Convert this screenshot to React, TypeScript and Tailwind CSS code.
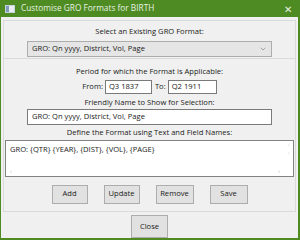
import { ChevronDown } from 'lucide-react';

const font = { fontFamily: '"Open Sans", "Noto Sans", sans-serif' };

const Button = ({ label, className = '' }: { label: string; className?: string }) => (
  <div
    className={`flex items-center justify-center bg-[#e1e1e1] border border-[#adadad] text-[#1a1a1a] ${className}`}
  >
    {label}
  </div>
);

const App = () => {
  return (
    <div className="w-[300px] h-[240px] bg-[#4e8b22] flex flex-col text-[7.6px] leading-none text-[#1a1a1a]" style={font}>
      {/* title bar */}
      <div className="h-[17px] flex items-center pl-[5px] pr-[8px] shrink-0">
        <div className="w-[10px] h-[8px] bg-[#e8eef4] border border-[#c8d2dc] flex">
          <div className="w-[3px] h-full bg-[#7f9bb8]" />
        </div>
        <span className="ml-[6px] text-[#e9f2e2] text-[8.3px]">Customise GRO Formats for BIRTH</span>
        <span className="ml-auto text-[#e9f2e2] text-[10px]">✕</span>
      </div>

      {/* body */}
      <div className="flex-1 ml-px mr-[2px] mb-[2px] bg-[#f0f0f0] flex flex-col pt-[3px] px-[2px]">
        <div className="border border-[#dadada] flex flex-col">
          <div className="flex flex-col items-center h-[38px] pt-[7px] border-b border-[#dadada]">
            <span>Select an Existing GRO Format:</span>
            <div className="mt-[5px] w-[245px] h-[16px] bg-[#e5e5e5] border border-[#adadad] flex items-center pl-[4px] pr-[4px]">
              <span>GRO: Qn yyyy, District, Vol, Page</span>
              <ChevronDown className="ml-auto w-[8px] h-[8px] text-[#606060]" strokeWidth={1.5} />
            </div>
          </div>

          <div className="flex flex-col items-center pt-[9px] pb-[7px]">
            <span>Period for which the Format is Applicable:</span>
            <div className="mt-[4px] flex items-center">
              <span>From:</span>
              <div className="ml-[2px] w-[47px] h-[14px] bg-white border border-[#7a7a7a] flex items-center pl-[3px]">Q3 1837</div>
              <span className="ml-[3px]">To:</span>
              <div className="ml-[2px] w-[49px] h-[14px] bg-white border border-[#7a7a7a] flex items-center pl-[3px]">Q2 1911</div>
            </div>
            <span className="mt-[5px]">Friendly Name to Show for Selection:</span>
            <div className="mt-[3px] w-[245px] h-[16px] bg-white border border-[#7a7a7a] flex items-center pl-[4px]">
              GRO: Qn yyyy, District, Vol, Page
            </div>
            <span className="mt-[4px]">Define the Format using Text and Field Names:</span>
            <div className="mt-[3px] self-stretch mx-[1px] h-[37px] bg-white border border-[#828282] flex">
              <div className="flex-1 flex flex-col">
                <div className="flex-1 pl-[4px] pt-[5px]">GRO: {'{QTR}'} {'{YEAR}'}, {'{DIST}'}, {'{VOL}'}, {'{PAGE}'}</div>
                <div className="h-[9px] flex items-center justify-between px-[4px] text-[#b0b0b0] text-[6px]">
                  <span>‹</span>
                  <span>›</span>
                </div>
              </div>
              <div className="w-[9px] flex flex-col items-center text-[#b0b0b0] text-[6px] pt-[3px] gap-[2px]">
                <span>˄</span>
                <span>˅</span>
              </div>
            </div>
            <div className="mt-[8px] flex gap-[16px]">
              <Button label="Add" className="w-[36px] h-[19px]" />
              <Button label="Update" className="w-[36px] h-[19px]" />
              <Button label="Remove" className="w-[38px] h-[19px]" />
              <Button label="Save" className="w-[38px] h-[19px]" />
            </div>
          </div>
        </div>
        <div className="flex-1 flex justify-center items-end">
          <Button label="Close" className="w-[37px] h-[23px]" />
        </div>
      </div>
    </div>
  );
};

export default App;
